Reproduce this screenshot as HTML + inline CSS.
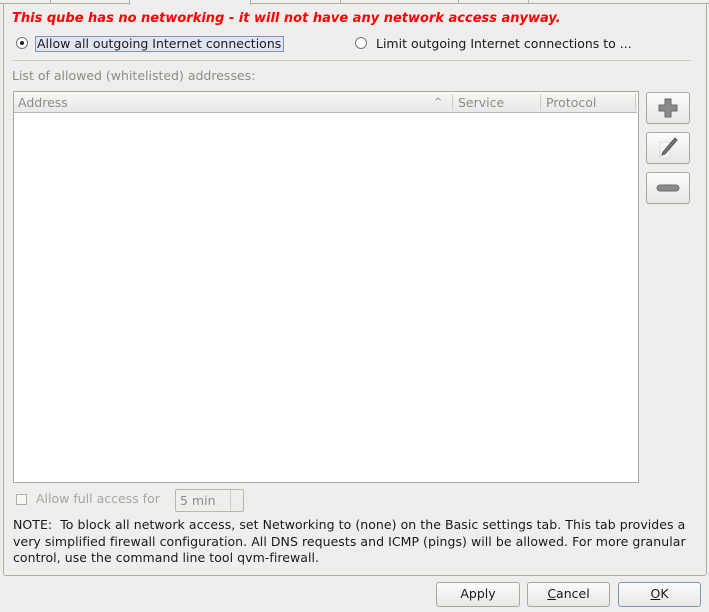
<!DOCTYPE html>
<html><head><style>
*{box-sizing:border-box}
body{margin:0;width:709px;height:612px;background:#efeeed;font-family:"DejaVu Sans","Liberation Sans",sans-serif;font-size:12.5px;color:#1a1a1a;position:relative;overflow:hidden;letter-spacing:0}
.a{position:absolute;white-space:nowrap}
.btn{position:absolute;border:1px solid #a8a6a3;border-radius:3px;background:linear-gradient(#fbfbfa,#e8e7e5);text-align:center;line-height:22px}
</style></head><body>
<div class="a" style="left:0;top:0;width:709px;height:4px;border-bottom:1px solid #b0aeab"></div>
<div class="a" style="left:50px;top:0;width:1px;height:4px;background:#b0aeab"></div>
<div class="a" style="left:129px;top:0;width:122px;height:5px;background:#efeeed;border-left:1px solid #b0aeab;border-right:1px solid #b0aeab"></div>
<div class="a" style="left:340px;top:0;width:1px;height:4px;background:#b0aeab"></div>
<div class="a" style="left:458px;top:0;width:1px;height:4px;background:#b0aeab"></div>
<div class="a" style="left:528px;top:0;width:1px;height:4px;background:#b0aeab"></div>
<div class="a" style="left:3px;top:3px;width:704px;height:573px;border:1px solid #b0aeab;border-top:none;border-radius:0 0 3px 3px"></div>
<div class="a" style="left:12px;top:11px;color:#f00;font-weight:bold;font-style:italic;font-size:13px">This qube has no networking - it will not have any network access anyway.</div>
<div class="a" style="left:16px;top:37px;width:12px;height:12px;border:1px solid #777;border-radius:50%;background:#fff"></div>
<div class="a" style="left:20px;top:41px;width:4px;height:4px;border-radius:50%;background:#222"></div>
<div class="a" style="left:35px;top:36px;width:249px;height:16px;border:1px solid #7a96c0;background:#dfe6f0;line-height:14px;padding-left:1px;letter-spacing:0">Allow all outgoing Internet connections</div>
<div class="a" style="left:355px;top:37px;width:12px;height:12px;border:1px solid #777;border-radius:50%;background:#fff"></div>
<div class="a" style="left:376px;top:36px;line-height:16px">Limit outgoing Internet connections to ...</div>
<div class="a" style="left:12px;top:60px;width:679px;height:1px;background:#cfcdca"></div>
<div class="a" style="left:12px;top:68px;color:#8e8c89">List of allowed (whitelisted) addresses:</div>
<div class="a" style="left:13px;top:91px;width:626px;height:392px;border:1px solid #a8a6a3;background:#fff"></div>
<div class="a" style="left:14px;top:92px;width:623px;height:21px;background:linear-gradient(#f7f7f6,#e9e8e6);border-bottom:1px solid #b8b6b3;color:#8e8c89;line-height:21px">
<span class="a" style="left:4px">Address</span>
<span class="a" style="left:420px;font-size:10px">^</span>
<span class="a" style="left:438px;top:2px;width:1px;height:16px;background:#cfcdca"></span>
<span class="a" style="left:444px">Service</span>
<span class="a" style="left:526px;top:2px;width:1px;height:16px;background:#cfcdca"></span>
<span class="a" style="left:532px">Protocol</span>
<span class="a" style="left:621px;top:2px;width:1px;height:16px;background:#cfcdca"></span>
</div>
<div class="btn" style="left:646px;top:92px;width:44px;height:32px">
<svg width="22" height="22" viewBox="0 0 22 22" style="margin-top:4px"><path d="M8 2h6v6h6v6h-6v6h-6v-6h-6v-6h6z" fill="#8a8a88" stroke="#6a6a68"/></svg></div>
<div class="btn" style="left:646px;top:132px;width:44px;height:32px">
<svg width="22" height="24" viewBox="0 0 22 24" style="margin-top:3px"><path d="M3 6h10v16h-10z" fill="#f4f4f4" stroke="#ddd"/><path d="M18 2l2 2-12 14-3 1 1-3z" fill="#777" stroke="#555"/></svg></div>
<div class="btn" style="left:646px;top:172px;width:44px;height:32px">
<svg width="24" height="10" viewBox="0 0 24 10" style="margin-top:10px"><rect x="1" y="2" width="22" height="6" rx="3" fill="#8a8a88" stroke="#6a6a68"/></svg></div>
<div class="a" style="left:16px;top:494px;width:11px;height:11px;border:1px solid #b0aeab;background:#f6f6f5"></div>
<div class="a" style="left:36px;top:491px;color:#a8a6a3">Allow full access for</div>
<div class="a" style="left:175px;top:489px;width:69px;height:23px;border:1px solid #b8b6b3;border-radius:2px;color:#8e8c89;line-height:21px;padding-left:4px">5 min</div>
<div class="a" style="left:230px;top:490px;width:1px;height:21px;background:#cfcdca"></div>
<div class="a" style="left:13px;top:517px;line-height:16.5px;letter-spacing:0.05px">NOTE:&nbsp; To block all network access, set Networking to (none) on the Basic settings tab. This tab provides a<br>very simplified firewall configuration. All DNS requests and ICMP (pings) will be allowed. For more granular<br>control, use the command line tool qvm-firewall.</div>
<div class="btn" style="left:436px;top:582px;width:84px;height:25px">Apply</div>
<div class="btn" style="left:527px;top:582px;width:83px;height:25px"><u>C</u>ancel</div>
<div class="btn" style="left:618px;top:582px;width:83px;height:25px;border-color:#7a96c0"><u>O</u>K</div>
</body></html>
